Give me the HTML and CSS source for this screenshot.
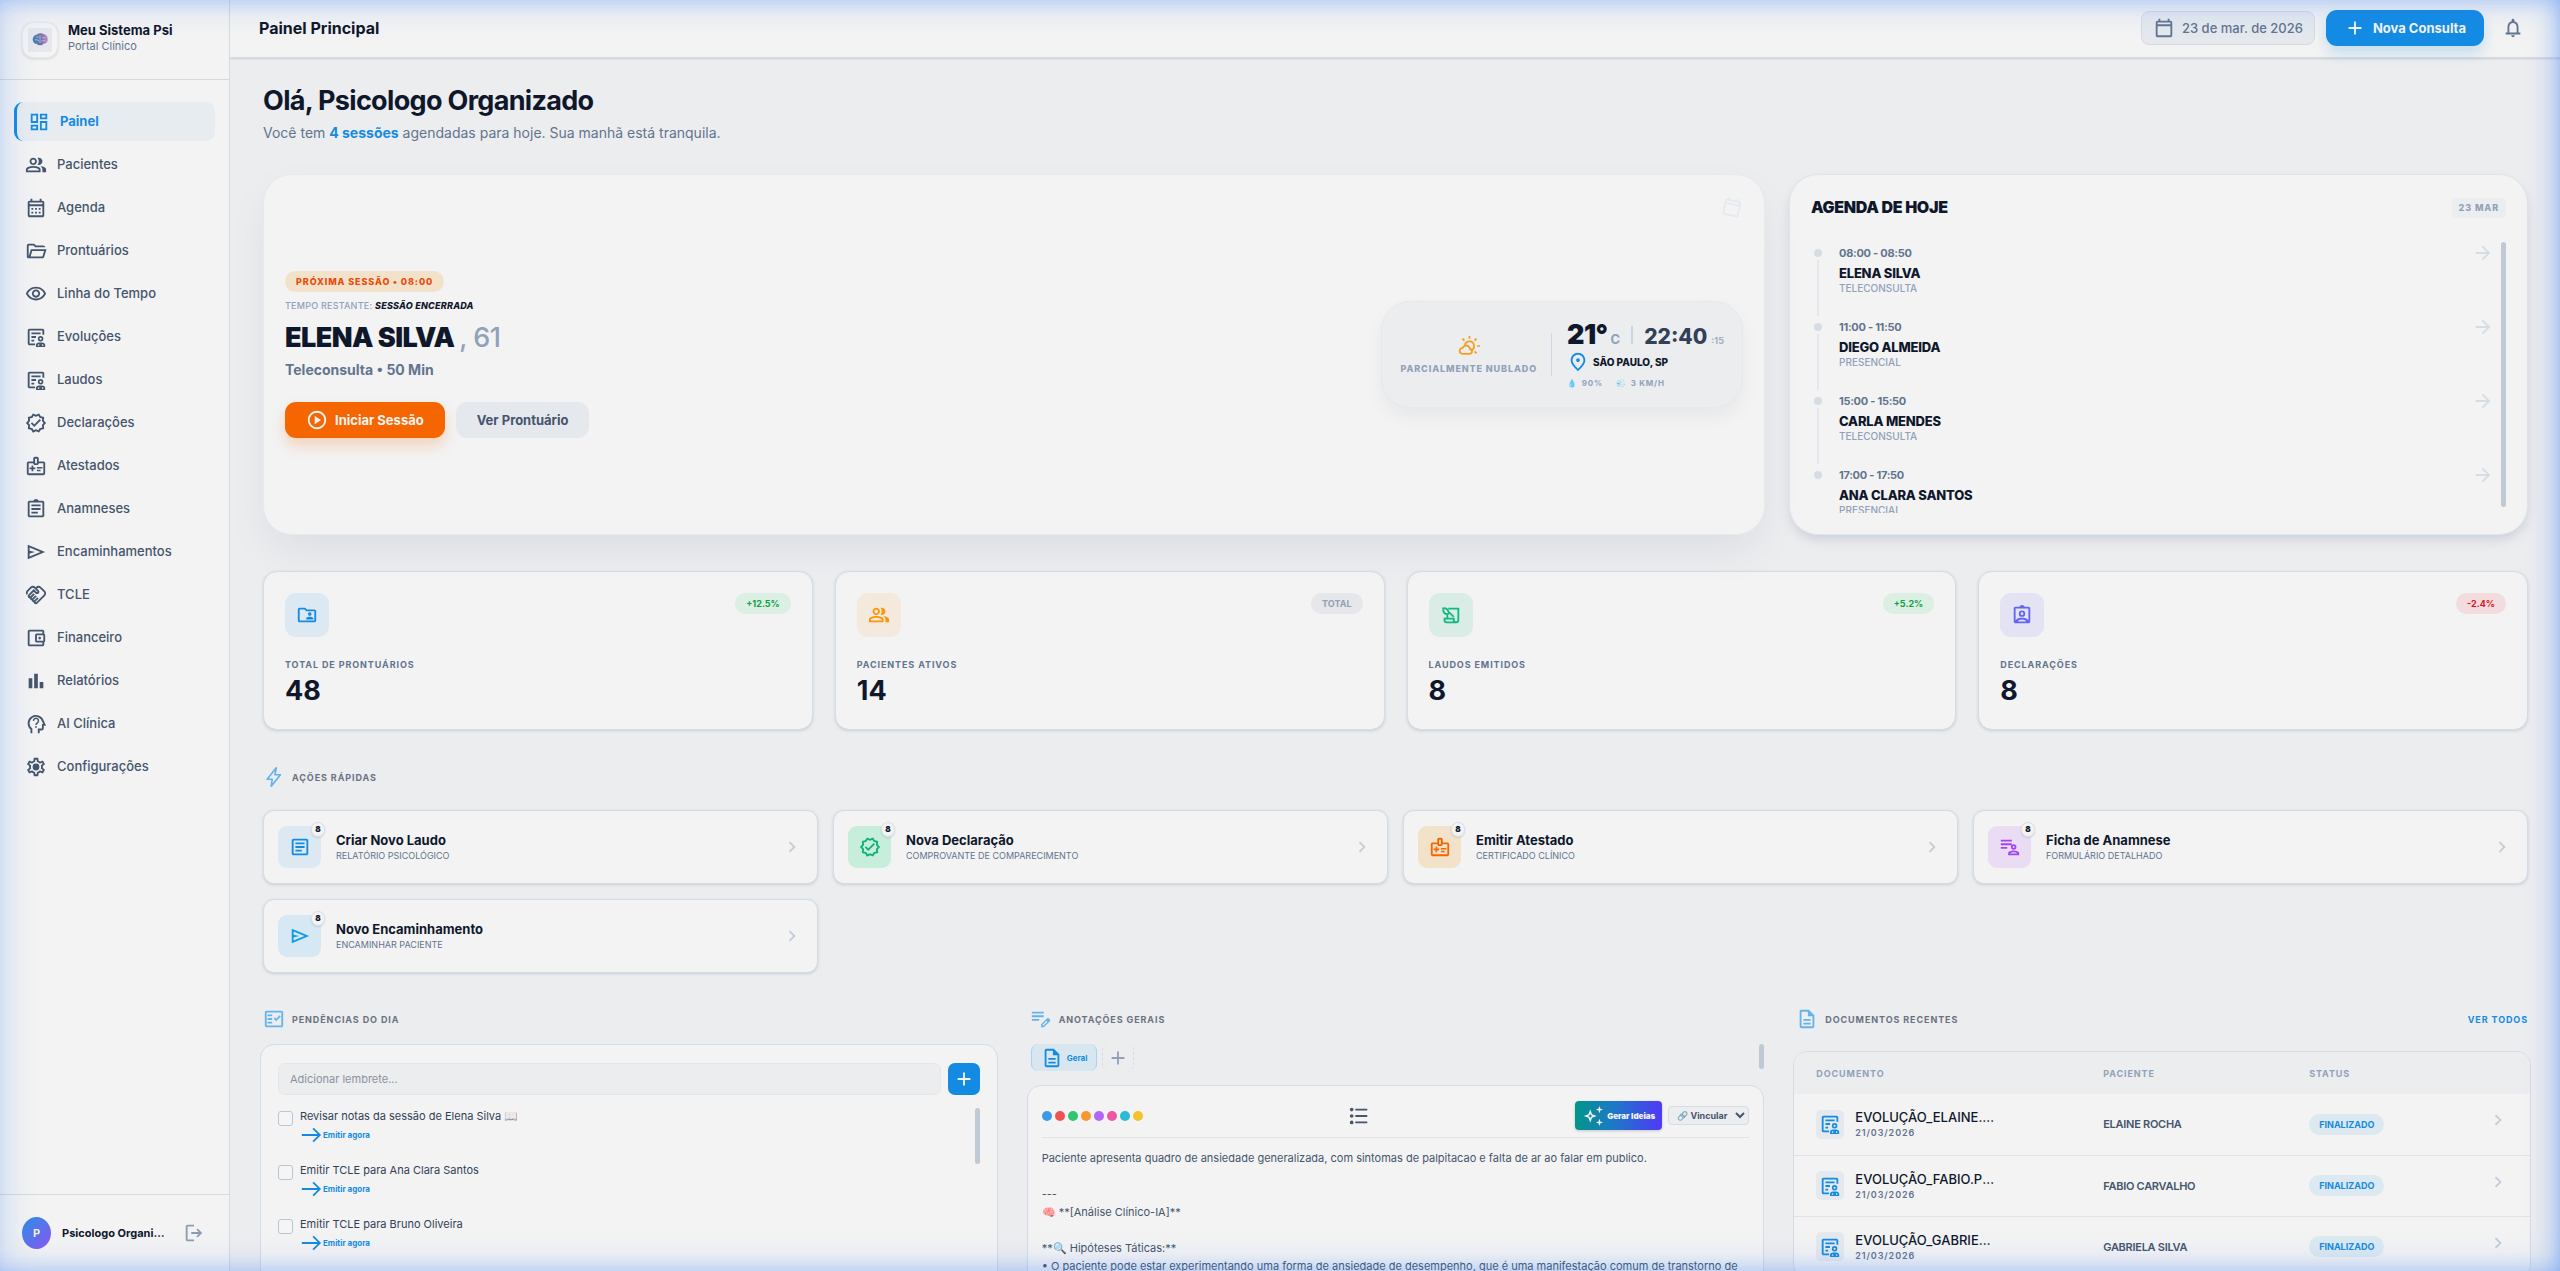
FILE: index.html
```html
<!DOCTYPE html>
<html lang="pt-BR">
<head>
<meta charset="utf-8">
<title>Meu Sistema Psi — Painel Principal</title>
<link rel="stylesheet" href="styles.css">
</head>
<body>
<svg class="sprite" aria-hidden="true">
  <symbol id="i-dashboard" viewBox="0 0 24 24"><path d="M19 5v2h-4V5h4M9 5v6H5V5h4m10 8v6h-4v-6h4M9 17v2H5v-2h4M21 3h-8v6h8V3zM11 3H3v10h8V3zm10 8h-8v10h8V11zm-10 4H3v6h8v-6z"/></symbol>
  <symbol id="i-group" viewBox="0 -960 960 960"><path d="M40-160v-112q0-34 17.500-62.500T104-378q62-31 126-46.500T360-440q66 0 130 15.500T616-378q29 15 46.500 43.500T680-272v112H40Zm720 0v-120q0-44-24.500-84.500T666-434q51 6 96 20.500t84 35.500q36 20 55 44.500t19 53.500v120H760ZM360-480q-66 0-113-47t-47-113q0-66 47-113t113-47q66 0 113 47t47 113q0 66-47 113t-113 47Zm400-160q0 66-47 113t-113 47q-11 0-28-2.500t-28-5.500q27-32 41.500-71t14.500-81q0-42-14.500-81T544-792q14-5 28-6.500t28-1.500q66 0 113 47t47 113ZM120-240h480v-32q0-11-5.500-20T580-306q-54-27-109-40.500T360-360q-56 0-111 13.500T140-306q-9 5-14.500 14t-5.500 20v32Zm240-320q33 0 56.500-23.500T440-640q0-33-23.500-56.500T360-720q-33 0-56.500 23.500T280-640q0 33 23.500 56.500T360-560Z"/></symbol>
  <symbol id="i-today" viewBox="0 -960 960 960"><path d="M200-80q-33 0-56.500-23.500T120-160v-560q0-33 23.500-56.500T200-800h40v-80h80v80h320v-80h80v80h40q33 0 56.500 23.500T840-720v560q0 33-23.500 56.500T760-80H200Zm0-80h560v-400H200v400Zm0-480h560v-80H200v80Z"/></symbol>
  <symbol id="i-month" viewBox="0 -960 960 960"><path d="M200-80q-33 0-56.500-23.500T120-160v-560q0-33 23.500-56.500T200-800h40v-80h80v80h320v-80h80v80h40q33 0 56.500 23.500T840-720v560q0 33-23.500 56.500T760-80H200Zm0-80h560v-400H200v400Zm0-480h560v-80H200v80Z"/><path d="M280-480h80v80h-80zM440-480h80v80h-80zM600-480h80v80h-80zM280-320h80v80h-80zM440-320h80v80h-80zM600-320h80v80h-80z"/></symbol>
  <symbol id="i-folder" viewBox="0 -960 960 960"><path d="M160-160q-33 0-56.500-23.500T80-240v-480q0-33 23.500-56.500T160-800h240l80 80h320q33 0 56.500 23.500T880-640H447l-80-80H160v480l96-320h684L837-217q-8 26-29.500 41.500T760-160H160Zm84-80h516l72-240H316l-72 240Z"/></symbol>
  <symbol id="i-eye" viewBox="0 0 24 24"><path d="M12 6c3.790 0 7.170 2.130 8.820 5.500C19.170 14.870 15.790 17 12 17s-7.170-2.130-8.820-5.500C4.830 8.130 8.210 6 12 6m0-2C7 4 2.730 7.110 1 11.500 2.730 15.890 7 19 12 19s9.270-3.110 11-7.500C21.270 7.110 17 4 12 4zm0 5c1.380 0 2.500 1.120 2.500 2.500S13.380 14 12 14s-2.500-1.120-2.500-2.500S10.620 9 12 9m0-2c-2.480 0-4.500 2.020-4.500 4.500S9.520 16 12 16s4.500-2.020 4.500-4.500S14.480 7 12 7z"/></symbol>
  <symbol id="i-notes" viewBox="0 0 24 24"><path d="M11 21H5c-1.100 0-2-.9-2-2V5c0-1.100.9-2 2-2h14c1.100 0 2 .9 2 2v4.500h-2V5H5v14h6zM7 7h10v2H7zM7 11h5v2H7zM7 15h3v2H7z"/><path fill-rule="evenodd" d="M17 11a3 3 0 1 1 0 6 3 3 0 0 1 0-6zm0 1.800a1.200 1.200 0 1 0 0 2.400 1.200 1.200 0 0 0 0-2.400z"/><path fill-rule="evenodd" d="M12 23v-2.500c0-2 2-2.500 5-2.500s5 .5 5 2.500V23zm2-1.500h1.500V20c-1 .1-1.500.3-1.500.8zm4.500 0H20v-.7c0-.5-.5-.7-1.500-.8z"/></symbol>
  <symbol id="i-verified" viewBox="0 0 24 24"><path d="M23 11.990l-2.440-2.790.340-3.690-3.610-.820L15.400 1.500 12 2.960 8.600 1.500 6.710 4.690 3.100 5.500l.340 3.700L1 11.990l2.440 2.790-.340 3.700 3.610.820 1.890 3.200 3.400-1.470 3.400 1.460 1.890-3.190 3.610-.820-.340-3.690L23 11.990zm-3.950 1.480l-.560.650.080.850.180 1.950-1.900.430-.840.190-.440.740-.990 1.680-1.780-.770-.800-.340-.790.340-1.780.770-.990-1.670-.440-.740-.840-.190-1.900-.430.180-1.960.080-.850-.560-.650L3.670 12l1.290-1.480.560-.650-.090-.860-.180-1.940 1.900-.430.840-.190.440-.740.990-1.680 1.780.770.800.340.790-.340 1.780-.770.990 1.680.440.740.840.190 1.900.430-.180 1.950-.080.850.560.650 1.290 1.470-1.280 1.480z"/><path d="M10.090 13.500l-2.320-2.330-1.480 1.490 3.800 3.810 7.340-7.360-1.480-1.490z"/></symbol>
  <symbol id="i-badge" viewBox="0 0 24 24"><path fill-rule="evenodd" d="M20 7h-5V4c0-1.100-.9-2-2-2h-2c-1.100 0-2 .9-2 2v3H4c-1.100 0-2 .9-2 2v11c0 1.100.9 2 2 2h16c1.100 0 2-.9 2-2V9c0-1.100-.9-2-2-2zm-9-3h2v5h-2V4zm9 16H4V9h5c0 1.100.9 2 2 2h2c1.100 0 2-.9 2-2h5v11z"/><path d="M7.200 11.500h1.800v2.200h2.200v1.800H9v2.200H7.200v-2.200H5v-1.800h2.200zM13 13h6v1.600h-6zM13 16h4v1.600h-4z"/></symbol>
  <symbol id="i-clip" viewBox="0 0 24 24"><path d="M7 15h7v2H7zm0-4h10v2H7zm0-4h10v2H7zM19 3h-4.180C14.400 1.840 13.300 1 12 1s-2.400.840-2.820 2H5c-1.100 0-2 .9-2 2v14c0 1.100.9 2 2 2h14c1.100 0 2-.9 2-2V5c0-1.100-.9-2-2-2zm0 16H5V5h14v14z"/></symbol>
  <symbol id="i-send" viewBox="0 -960 960 960"><path d="M120-160v-640l760 320-760 320Zm80-120 474-200-474-200v140l240 60-240 60v140Z"/></symbol>
  <symbol id="i-hands" viewBox="0 0 24 24"><path d="M12.220 19.850c-.180.180-.500.210-.710 0-.180-.180-.210-.500 0-.710l3.390-3.390-1.410-1.410-3.390 3.390c-.190.200-.510.190-.710 0-.210-.210-.180-.530 0-.710l3.390-3.390-1.410-1.410-3.390 3.390c-.180.180-.500.210-.710 0-.190-.190-.190-.510 0-.710l3.390-3.390-1.420-1.410-3.390 3.390c-.180.180-.500.210-.710 0-.190-.200-.190-.510 0-.710L9.520 8.400l1.870 1.860c.950.950 2.590.940 3.540 0 .980-.980.980-2.560 0-3.540l-1.860-1.860.280-.280c.780-.780 2.050-.780 2.830 0l4.240 4.240c.780.780.780 2.050 0 2.830l-8.200 8.200zM21.830 13.070c1.560-1.560 1.560-4.090 0-5.660l-4.240-4.240c-1.560-1.560-4.090-1.560-5.660 0l-.280.280-.280-.280c-1.560-1.560-4.090-1.560-5.660 0L2.170 6.710C.750 8.130.620 10.340 1.770 11.900l1.450-1.450c-.390-.750-.260-1.700.370-2.330l3.540-3.540c.780-.780 2.050-.780 2.830 0l3.560 3.560c.180.180.210.500 0 .710-.210.210-.530.180-.710 0L9.520 5.570l-5.800 5.790c-.980.970-.980 2.560 0 3.540.390.390.890.630 1.420.700.070.520.300 1.020.700 1.420.400.400.900.630 1.420.700.070.520.300 1.020.700 1.420.400.400.900.630 1.420.700.070.540.310 1.030.700 1.420.470.470 1.100.730 1.770.730.670 0 1.300-.260 1.770-.730l8.210-8.190z"/></symbol>
  <symbol id="i-wallet" viewBox="0 0 24 24"><path d="M21 7.280V5c0-1.100-.9-2-2-2H5c-1.110 0-2 .9-2 2v14c0 1.100.890 2 2 2h14c1.100 0 2-.9 2-2v-2.280c.590-.350 1-.980 1-1.720V9c0-.740-.410-1.370-1-1.720zM20 9v6h-7V9h7zM5 19V5h14v2h-6c-1.100 0-2 .9-2 2v6c0 1.100.9 2 2 2h6v2H5z"/><circle cx="16" cy="12" r="1.500"/></symbol>
  <symbol id="i-bars" viewBox="0 0 24 24"><path d="M4 9h4v11H4zm12 4h4v7h-4zm-6-9h4v16h-4z"/></symbol>
  <symbol id="i-mind" viewBox="0 0 24 24"><path fill="none" stroke="currentColor" stroke-width="2" d="M7 22v-4.500A8 8 0 1 1 19.600 9L21.400 13H19.500v3.500a1.500 1.500 0 0 1-1.500 1.500h-3V22"/><path fill="none" stroke="currentColor" stroke-width="1.600" d="M9.300 8.600a2.700 2.700 0 1 1 4.200 2.200c-1 .7-1.500 1.100-1.500 2.300"/><circle cx="12" cy="15.200" r="1"/></symbol>
  <symbol id="i-gear" viewBox="0 0 24 24"><path d="M19.430 12.980c.040-.320.070-.640.070-.980 0-.340-.030-.660-.070-.980l2.110-1.650c.190-.150.240-.420.120-.640l-2-3.460c-.090-.160-.260-.250-.440-.250-.060 0-.120.010-.170.030l-2.490 1c-.520-.400-1.080-.730-1.690-.980l-.380-2.650C14.460 2.180 14.250 2 14 2h-4c-.250 0-.460.180-.490.420l-.380 2.650c-.610.250-1.170.590-1.690.980l-2.490-1c-.060-.020-.120-.030-.180-.030-.170 0-.340.090-.430.250l-2 3.460c-.130.220-.070.490.120.640l2.110 1.650c-.040.320-.070.650-.070.980 0 .330.030.660.070.980l-2.110 1.650c-.190.150-.240.420-.120.640l2 3.460c.090.160.260.250.440.250.060 0 .120-.010.170-.030l2.490-1c.520.400 1.080.730 1.690.980l.380 2.650c.030.240.240.420.490.420h4c.250 0 .460-.180.490-.420l.380-2.650c.610-.250 1.170-.590 1.690-.980l2.490 1c.060.020.120.030.180.030.170 0 .340-.090.430-.250l2-3.460c.120-.220.070-.490-.120-.640l-2.110-1.650zm-1.980-1.710c.040.310.050.520.050.730 0 .210-.020.430-.050.730l-.140 1.130.890.700 1.080.840-.700 1.210-1.270-.510-1.040-.420-.900.680c-.430.320-.840.560-1.250.730l-1.060.430-.160 1.130-.200 1.350h-1.400l-.190-1.350-.160-1.130-1.060-.430c-.430-.180-.830-.410-1.230-.710l-.910-.700-1.060.430-1.270.510-.700-1.210 1.080-.840.890-.700-.140-1.130c-.030-.310-.050-.540-.050-.740s.020-.430.050-.730l.140-1.130-.890-.700-1.080-.840.700-1.210 1.270.510 1.040.420.900-.680c.430-.320.840-.560 1.250-.730l1.060-.430.160-1.130.200-1.350h1.390l.190 1.350.160 1.130 1.060.430c.430.180.830.410 1.230.710l.910.700 1.060-.430 1.270-.510.700 1.210-1.070.850-.890.700.140 1.130z"/><circle cx="12" cy="12" r="3.700"/></symbol>
  <symbol id="i-logout" viewBox="0 0 24 24"><path d="M5 5h7V3H5c-1.100 0-2 .9-2 2v14c0 1.100.9 2 2 2h7v-2H5V5zM16 7l-1.400 1.450L17.150 11H9v2h8.150l-2.550 2.550L16 17l5-5z"/></symbol>
  <symbol id="i-bell" viewBox="0 0 24 24"><path d="M12 22c1.100 0 2-.9 2-2h-4c0 1.100.9 2 2 2zm6-5v-6c0-3.070-1.630-5.640-4.500-6.320V3.500c0-.830-.670-1.500-1.500-1.500s-1.500.670-1.500 1.500v1.180C7.640 5.360 6 7.920 6 11v6H4v2h16v-2h-2zm-2 0H8v-6c0-2.480 1.510-4.500 4-4.500s4 2.020 4 4.500v6z"/></symbol>
  <symbol id="i-add" viewBox="0 0 24 24"><path d="M19 13h-6v6h-2v-6H5v-2h6V5h2v6h6v2z"/></symbol>
  <symbol id="i-play" viewBox="0 0 24 24"><path d="M12 2C6.480 2 2 6.480 2 12s4.480 10 10 10 10-4.480 10-10S17.520 2 12 2zm0 18c-4.410 0-8-3.590-8-8s3.590-8 8-8 8 3.590 8 8-3.590 8-8 8zM9.500 16.500l7-4.500-7-4.500z"/></symbol>
  <symbol id="i-sun" viewBox="0 0 24 24"><g fill="none" stroke="currentColor" stroke-width="1.900"><path d="M12.500 1v3.200M20.200 4l-2.200 2.200M24 12h-3.200M20.300 20l-2.200-2.200M4.800 4L7 6.200M7.500 11.800a5 5 0 1 1 6.300 5.100"/><path d="M5 20.500a3.200 3.200 0 0 1 0-6.400 4.200 4.200 0 0 1 8 1.200 2.600 2.600 0 0 1-.5 5.200z"/></g></symbol>
  <symbol id="i-pin" viewBox="0 0 24 24"><path d="M12 12c-1.100 0-2-.9-2-2s.9-2 2-2 2 .9 2 2-.9 2-2 2zm6-1.800C18 6.570 15.350 4 12 4s-6 2.570-6 6.200c0 2.340 1.950 5.440 6 9.140 4.050-3.700 6-6.800 6-9.140zM12 2c4.200 0 8 3.220 8 8.200 0 3.320-2.670 7.250-8 11.800-5.330-4.550-8-8.480-8-11.800C4 5.220 7.800 2 12 2z"/></symbol>
  <symbol id="i-arrow" viewBox="0 0 24 24"><path d="M12 4l-1.410 1.410L16.170 11H4v2h12.170l-5.580 5.590L12 20l8-8z"/></symbol>
  <symbol id="i-long" viewBox="0 0 24 24"><path d="M15 4l-1.410 1.410L19.170 11H2v2h17.170l-5.580 5.590L15 20l8-8z"/></symbol>
  <symbol id="i-shared" viewBox="0 0 24 24"><path d="M20 6h-8l-2-2H4c-1.100 0-2 .9-2 2v12c0 1.100.9 2 2 2h16c1.100 0 2-.9 2-2V8c0-1.100-.9-2-2-2zm0 12H4V6h5.170l2 2H20v10z"/><circle cx="15" cy="11" r="2"/><path d="M11 17h8v-1c0-1.330-2.670-2-4-2s-4 .670-4 2z"/></symbol>
  <symbol id="i-edu" viewBox="0 0 24 24"><g fill="none" stroke="currentColor" stroke-width="2"><path d="M8 15.500V12M9 5h11v12.500a2.500 2.500 0 0 1-5 0V16H5v2a2 2 0 0 0 2 2h10.500"/><path d="M2.500 5c3.200-1 6 0 6.800 3.500l5.700 5.500M3.500 6c0 3 2 5 5 5l2-2"/></g></symbol>
  <symbol id="i-person" viewBox="0 0 24 24"><path fill-rule="evenodd" d="M19 3h-4.180C14.400 1.840 13.300 1 12 1s-2.400.840-2.820 2H5c-1.100 0-2 .9-2 2v14c0 1.100.9 2 2 2h14c1.100 0 2-.9 2-2V5c0-1.100-.9-2-2-2zM5 5h14v12.600C17.500 15.600 14.800 15 12 15s-5.500.600-7 2.600V5zm2.500 14c.7-1.200 2.700-2 4.500-2s3.800.8 4.500 2z"/><path fill-rule="evenodd" d="M12 7a3.500 3.500 0 1 0 0 7 3.500 3.500 0 0 0 0-7zm0 2a1.500 1.500 0 1 1 0 3 1.500 1.500 0 0 1 0-3z"/></symbol>
  <symbol id="i-bolt" viewBox="0 0 24 24"><path fill="none" stroke="currentColor" stroke-width="1.800" stroke-linejoin="round" d="M14.500 2L4.500 14.500H10L9 22l10-12.500h-6z"/></symbol>
  <symbol id="i-check" viewBox="0 0 24 24"><path fill-rule="evenodd" d="M4 3h16c1.100 0 2 .9 2 2v14c0 1.100-.9 2-2 2H4c-1.100 0-2-.9-2-2V5c0-1.100.9-2 2-2zm0 2v14h16V5z"/><path d="M5 7h5v2H5zM5 11h5v2H5zM5 15h5v2H5zM19.400 9.400L18 8l-3.600 3.600L13 10.200l-1.400 1.400 2.800 2.800z"/></symbol>
  <symbol id="i-edit" viewBox="0 0 24 24"><path d="M2 4h13v2H2zM2 8h13v2H2zM2 12h8v2H2z"/><path fill-rule="evenodd" d="M12 21v-3.100l6.400-6.400a1.700 1.700 0 0 1 2.400 0l.7.700a1.700 1.700 0 0 1 0 2.400L15.100 21zm1.800-1.700h.9l4.300-4.300-1-1-4.200 4.300z"/></symbol>
  <symbol id="i-doc" viewBox="0 0 24 24"><path d="M8 16h8v2H8zm0-4h8v2H8zm6-10H6c-1.100 0-2 .9-2 2v16c0 1.100.890 2 1.990 2H18c1.100 0 2-.9 2-2V8l-6-6zm4 18H6V4h7v5h5v11z"/></symbol>
  <symbol id="i-article" viewBox="0 0 24 24"><path d="M19 5v14H5V5h14m0-2H5c-1.100 0-2 .9-2 2v14c0 1.100.9 2 2 2h14c1.100 0 2-.9 2-2V5c0-1.100-.9-2-2-2zm-5 14H7v-2h7v2zm3-4H7v-2h10v2zm0-4H7V7h10v2z"/></symbol>
  <symbol id="i-patient" viewBox="0 0 24 24"><path d="M2 4h12v2H2zM2 8h12v2H2zM2 12h7v2H2z"/><path fill-rule="evenodd" d="M16 9a3 3 0 1 1 0 6 3 3 0 0 1 0-6zm0 2a1 1 0 1 0 0 2 1 1 0 0 0 0-2z"/><path fill-rule="evenodd" d="M10 21v-2.300c0-1.900 3.500-2.900 6-2.900s6 1 6 2.900V21zm2.200-1.800h7.600c-.5-.8-2.300-1.400-3.800-1.400s-3.300.6-3.800 1.400z"/></symbol>
  <symbol id="i-spark" viewBox="0 0 24 24"><path fill-rule="evenodd" d="M9 5l2 5 5 2-5 2-2 5-2-5-5-2 5-2zm0 4.600L8.200 11.200 6.500 12l1.700.8L9 14.500l.8-1.700 1.700-.8-1.700-.8z"/><path d="M19 1l1 3 3 1-3 1-1 3-1-3-3-1 3-1zM19 15l1 3 3 1-3 1-1 3-1-3-3-1 3-1z"/></symbol>
  <symbol id="i-list" viewBox="0 0 24 24"><circle cx="4" cy="5" r="2"/><circle cx="4" cy="12" r="2"/><circle cx="4" cy="19" r="2"/><path d="M8 4h13v2H8zM8 11h13v2H8zM8 18h13v2H8z"/></symbol>
  <symbol id="i-chev" viewBox="0 0 24 24"><path d="M10 6L8.590 7.410 13.170 12l-4.580 4.590L10 18l6-6z"/></symbol>
</svg>

<div class="app">
  <aside class="sidebar">
    <div class="brand">
      <span class="logo"><svg viewBox="0 0 24 24"><defs><linearGradient id="brain-fill" x1="0" y1="0" x2="1" y2="0"><stop offset="0" stop-color="#3f86b5"/><stop offset=".5" stop-color="#6a6fae"/><stop offset="1" stop-color="#c58ac4"/></linearGradient></defs><rect width="24" height="24" fill="#e7e8ec"/><path fill="url(#brain-fill)" d="M5 13c-1-3 1-6 4-6.500 2-1.500 5-1.500 7-.2 3 .5 4.500 4 3.500 6.500-.5 2-2 3-4 2.800-.5 1.600-2 2.200-3.500 1.400-1.500.5-2.800 0-3.200-1.200C6.800 16 5.500 15 5 13z"/><path fill="none" stroke="#e3e8f0" stroke-width=".6" d="M8 8.500c1 1 2 1 3 .3M7 12c1.500-.8 3 .2 4 1.200M12 7v8M14 9c1 1.200 2.500 1 3.500.6M13.500 13c1.200-.6 2.600-.4 4 .2"/></svg></span>
      <div><div class="brand-name">Meu Sistema Psi</div><div class="brand-sub">Portal Clínico</div></div>
    </div>
    <nav class="nav">
      <a class="active" href="#"><svg class="icon"><use href="#i-dashboard"/></svg>Painel</a>
      <a href="#"><svg class="icon"><use href="#i-group"/></svg>Pacientes</a>
      <a href="#"><svg class="icon"><use href="#i-month"/></svg>Agenda</a>
      <a href="#"><svg class="icon"><use href="#i-folder"/></svg>Prontuários</a>
      <a href="#"><svg class="icon"><use href="#i-eye"/></svg>Linha do Tempo</a>
      <a href="#"><svg class="icon"><use href="#i-notes"/></svg>Evoluções</a>
      <a href="#"><svg class="icon"><use href="#i-notes"/></svg>Laudos</a>
      <a href="#"><svg class="icon"><use href="#i-verified"/></svg>Declarações</a>
      <a href="#"><svg class="icon"><use href="#i-badge"/></svg>Atestados</a>
      <a href="#"><svg class="icon"><use href="#i-clip"/></svg>Anamneses</a>
      <a href="#"><svg class="icon"><use href="#i-send"/></svg>Encaminhamentos</a>
      <a href="#"><svg class="icon"><use href="#i-hands"/></svg>TCLE</a>
      <a href="#"><svg class="icon"><use href="#i-wallet"/></svg>Financeiro</a>
      <a href="#"><svg class="icon"><use href="#i-bars"/></svg>Relatórios</a>
      <a href="#"><svg class="icon"><use href="#i-mind"/></svg>AI Clínica</a>
      <a href="#"><svg class="icon"><use href="#i-gear"/></svg>Configurações</a>
    </nav>
    <div class="user">
      <span class="avatar">P</span>
      <span class="user-name">Psicologo Organizado</span>
      <button class="bare" aria-label="Sair"><svg class="icon"><use href="#i-logout"/></svg></button>
    </div>
  </aside>

  <div class="page">
    <header class="topbar">
      <h1>Painel Principal</h1>
      <div class="date"><svg class="icon"><use href="#i-today"/></svg>23 de mar. de 2026</div>
      <button class="new"><svg class="icon"><use href="#i-add"/></svg>Nova Consulta</button>
      <button class="bare bell" aria-label="Notificações"><svg class="icon"><use href="#i-bell"/></svg></button>
    </header>

    <main class="content">
      <section class="hello">
        <h2>Olá, Psicologo Organizado</h2>
        <p>Você tem <strong>4 sessões</strong> agendadas para hoje. Sua manhã está tranquila.</p>
      </section>

      <section class="top">
        <article class="hero">
          <svg class="icon watermark"><use href="#i-today"/></svg>
          <div class="next">
            <span class="pill-next">PRÓXIMA SESSÃO • 08:00</span>
            <p class="remaining">TEMPO RESTANTE: <em>SESSÃO ENCERRADA</em></p>
            <h3>ELENA SILVA <span>, 61</span></h3>
            <p class="kind">Teleconsulta • 50 Min</p>
            <div class="actions">
              <button class="start"><svg class="icon"><use href="#i-play"/></svg>Iniciar Sessão</button>
              <button class="record">Ver Prontuário</button>
            </div>
          </div>
          <div class="weather">
            <div class="sky"><svg class="icon"><use href="#i-sun"/></svg><span>PARCIALMENTE NUBLADO</span></div>
            <div class="now">
              <div class="temp"><b>21°</b><small>C</small><i></i><time>22:40</time><small class="sec">:15</small></div>
              <div class="place"><svg class="icon"><use href="#i-pin"/></svg>SÃO PAULO, SP</div>
              <div class="air"><span><span class="emoji">💧</span>90%</span><span><span class="emoji">💨</span>3 KM/H</span></div>
            </div>
          </div>
        </article>

        <article class="agenda">
          <div class="agenda-head"><h3>AGENDA DE HOJE</h3><span>23 MAR</span></div>
          <div class="scroll">
            <ul class="slots">
              <li><span class="mark"></span><div><p class="time">08:00 - 08:50</p><p class="who">ELENA SILVA</p><p class="type">TELECONSULTA</p></div><svg class="icon"><use href="#i-arrow"/></svg></li>
              <li><span class="mark"></span><div><p class="time">11:00 - 11:50</p><p class="who">DIEGO ALMEIDA</p><p class="type">PRESENCIAL</p></div><svg class="icon"><use href="#i-arrow"/></svg></li>
              <li><span class="mark"></span><div><p class="time">15:00 - 15:50</p><p class="who">CARLA MENDES</p><p class="type">TELECONSULTA</p></div><svg class="icon"><use href="#i-arrow"/></svg></li>
              <li><span class="mark"></span><div><p class="time">17:00 - 17:50</p><p class="who">ANA CLARA SANTOS</p><p class="type">PRESENCIAL</p></div><svg class="icon"><use href="#i-arrow"/></svg></li>
            </ul>
            <span class="thumb thumb-agenda"></span>
          </div>
        </article>
      </section>

      <section class="stats">
        <article><div class="stat-top"><span class="tile blue"><svg class="icon"><use href="#i-shared"/></svg></span><span class="delta up">+12.5%</span></div><p>TOTAL DE PRONTUÁRIOS</p><b>48</b></article>
        <article><div class="stat-top"><span class="tile amber"><svg class="icon"><use href="#i-group"/></svg></span><span class="delta flat">TOTAL</span></div><p>PACIENTES ATIVOS</p><b>14</b></article>
        <article><div class="stat-top"><span class="tile green"><svg class="icon"><use href="#i-edu"/></svg></span><span class="delta up">+5.2%</span></div><p>LAUDOS EMITIDOS</p><b>8</b></article>
        <article><div class="stat-top"><span class="tile indigo"><svg class="icon"><use href="#i-person"/></svg></span><span class="delta down">-2.4%</span></div><p>DECLARAÇÕES</p><b>8</b></article>
      </section>

      <h4 class="label label-quick"><svg class="icon"><use href="#i-bolt"/></svg>AÇÕES RÁPIDAS</h4>
      <section class="quick">
        <a href="#"><span class="tile blue"><svg class="icon"><use href="#i-article"/></svg><span class="count">8</span></span><span class="quick-text"><b>Criar Novo Laudo</b><small>RELATÓRIO PSICOLÓGICO</small></span><svg class="icon chev"><use href="#i-chev"/></svg></a>
        <a href="#"><span class="tile mint"><svg class="icon"><use href="#i-verified"/></svg><span class="count">8</span></span><span class="quick-text"><b>Nova Declaração</b><small>COMPROVANTE DE COMPARECIMENTO</small></span><svg class="icon chev"><use href="#i-chev"/></svg></a>
        <a href="#"><span class="tile orange"><svg class="icon"><use href="#i-badge"/></svg><span class="count">8</span></span><span class="quick-text"><b>Emitir Atestado</b><small>CERTIFICADO CLÍNICO</small></span><svg class="icon chev"><use href="#i-chev"/></svg></a>
        <a href="#"><span class="tile purple"><svg class="icon"><use href="#i-patient"/></svg><span class="count">8</span></span><span class="quick-text"><b>Ficha de Anamnese</b><small>FORMULÁRIO DETALHADO</small></span><svg class="icon chev"><use href="#i-chev"/></svg></a>
        <a href="#"><span class="tile sky-blue"><svg class="icon"><use href="#i-send"/></svg><span class="count">8</span></span><span class="quick-text"><b>Novo Encaminhamento</b><small>ENCAMINHAR PACIENTE</small></span><svg class="icon chev"><use href="#i-chev"/></svg></a>
      </section>

      <section class="bottom">
        <div class="col">
          <h4 class="label"><svg class="icon"><use href="#i-check"/></svg>PENDÊNCIAS DO DIA</h4>
          <div class="panel todo">
            <form class="add"><input type="text" placeholder="Adicionar lembrete..." aria-label="Adicionar lembrete"><button type="button" aria-label="Adicionar"><svg class="icon"><use href="#i-add"/></svg></button></form>
            <div class="scroll">
              <ul class="tasks">
                <li><input type="checkbox" id="t1"><div><label for="t1">Revisar notas da sessão de Elena Silva <span class="emoji">📖</span></label><a href="#"><svg class="icon"><use href="#i-long"/></svg>Emitir agora</a></div></li>
                <li><input type="checkbox" id="t2"><div><label for="t2">Emitir TCLE para Ana Clara Santos</label><a href="#"><svg class="icon"><use href="#i-long"/></svg>Emitir agora</a></div></li>
                <li><input type="checkbox" id="t3"><div><label for="t3">Emitir TCLE para Bruno Oliveira</label><a href="#"><svg class="icon"><use href="#i-long"/></svg>Emitir agora</a></div></li>
              </ul>
              <span class="thumb thumb-todo"></span>
            </div>
          </div>
        </div>

        <div class="col">
          <h4 class="label"><svg class="icon"><use href="#i-edit"/></svg>ANOTAÇÕES GERAIS</h4>
          <div class="tabs">
            <button class="tab"><svg class="icon"><use href="#i-doc"/></svg>Geral</button>
            <button class="tab-add" aria-label="Nova aba"><svg class="icon"><use href="#i-add"/></svg></button>
            <span class="thumb thumb-tabs"></span>
          </div>
          <div class="panel notes">
            <div class="tools">
              <div class="dots"><i class="c1"></i><i class="c2"></i><i class="c3"></i><i class="c4"></i><i class="c5"></i><i class="c6"></i><i class="c7"></i><i class="c8"></i></div>
              <button class="bare list" aria-label="Lista"><svg class="icon"><use href="#i-list"/></svg></button>
              <div class="tools-end">
                <button class="ideas"><svg class="icon"><use href="#i-spark"/></svg>Gerar Ideias</button>
                <select aria-label="Vincular"><option>🔗 Vincular</option></select>
              </div>
            </div>
            <textarea rows="12" aria-label="Anotação">Paciente apresenta quadro de ansiedade generalizada, com sintomas de palpitacao e falta de ar ao falar em publico.

---
🧠 **[Análise Clínico-IA]**

**🔍 Hipóteses Táticas:**
• O paciente pode estar experimentando uma forma de ansiedade de desempenho, que é uma manifestação comum de transtorno de ansiedade social.</textarea>
          </div>
        </div>

        <div class="col">
          <h4 class="label label-docs"><svg class="icon"><use href="#i-doc"/></svg>DOCUMENTOS RECENTES<a href="#">VER TODOS</a></h4>
          <div class="panel docs">
            <table>
              <colgroup><col class="w-doc"><col class="w-who"><col class="w-status"><col></colgroup>
              <thead><tr><th>DOCUMENTO</th><th>PACIENTE</th><th>STATUS</th><th></th></tr></thead>
              <tbody>
                <tr><td><div class="file"><span><svg class="icon"><use href="#i-notes"/></svg></span><div><b>EVOLUÇÃO_ELAINE.ROCHA</b><small>21/03/2026</small></div></div></td><td class="patient">ELAINE ROCHA</td><td><span class="done">FINALIZADO</span></td><td class="go"><svg class="icon"><use href="#i-chev"/></svg></td></tr>
                <tr><td><div class="file"><span><svg class="icon"><use href="#i-notes"/></svg></span><div><b>EVOLUÇÃO_FABIO.PEREIRA</b><small>21/03/2026</small></div></div></td><td class="patient">FABIO CARVALHO</td><td><span class="done">FINALIZADO</span></td><td class="go"><svg class="icon"><use href="#i-chev"/></svg></td></tr>
                <tr><td><div class="file"><span><svg class="icon"><use href="#i-notes"/></svg></span><div><b>EVOLUÇÃO_GABRIELA.SILVA</b><small>21/03/2026</small></div></div></td><td class="patient">GABRIELA SILVA</td><td><span class="done">FINALIZADO</span></td><td class="go"><svg class="icon"><use href="#i-chev"/></svg></td></tr>
              </tbody>
            </table>
          </div>
        </div>
      </section>
    </main>
  </div>
</div>
<div class="glow"></div>
</body>
</html>
```
FILE: styles.css
```css
* { box-sizing: border-box; margin: 0; padding: 0; }
body { font-family: "Inter", "Noto Sans", sans-serif; font-size: 13px; color: #0f172b; background: #ecedef; }
button, input, select, textarea { font: inherit; color: inherit; }
button { border: 0; cursor: pointer; }
a { text-decoration: none; color: inherit; }
ul { list-style: none; }
.sprite { display: none; }
.icon { width: 22px; height: 22px; fill: currentColor; flex: none; display: block; }
.bare { background: none; }
.emoji { font-family: "Inter", "Noto Color Emoji", sans-serif; opacity: .8; }

.app { display: grid; grid-template-columns: 230px 1fr; height: 100vh; overflow: hidden; }

/* Sidebar */
.sidebar { display: flex; flex-direction: column; background: #f3f3f3; border-right: 1px solid #d3dae2; }
.brand { display: flex; gap: 10px; padding: 22px 22px 21px; border-bottom: 1px solid #d3dae2; }
.logo { width: 36px; height: 36px; border: 1px solid #e6e9ed; border-radius: 11px; background: #f4f4f4; box-shadow: 0 1px 3px rgba(15, 23, 43, .14); display: grid; place-items: center; }
.logo svg { width: 24px; height: 24px; }
.brand-name { font-weight: 700; line-height: 16px; }
.brand-sub { font-size: 11px; line-height: 16px; color: #62748e; }
.nav { flex: 1; display: flex; flex-direction: column; gap: 4px; padding: 22px 14px; }
.nav a { display: flex; align-items: center; gap: 10px; padding: 8px 11px; line-height: 23px; font-weight: 500; color: #45556c; border-radius: 9px; }
.nav .active { border-left: 3px solid #148be3; background: #e7ecf0; color: #148be3; font-weight: 700; }
.user { display: flex; align-items: center; gap: 11px; padding: 22px; border-top: 1px solid #d3dae2; }
.avatar { width: 29px; height: 32px; border-radius: 50%; background: linear-gradient(135deg, #2b8fe6, #8b55f3); color: #f3f3f3; font-size: 11px; font-weight: 700; display: grid; place-items: center; flex: none; }
.user-name { width: 104px; font-size: 11px; font-weight: 700; overflow: hidden; text-overflow: ellipsis; white-space: nowrap; }
.user .bare { color: #8b9db5; margin-left: 6px; }

/* Top bar */
.page { display: flex; flex-direction: column; min-width: 0; overflow: hidden; }
.topbar { flex: none; display: flex; align-items: center; gap: 11px; height: 58px; padding: 0 29px 2px; background: #f3f3f3; border-bottom: 1px solid #d3dae2; box-shadow: 0 1px 2px rgba(15, 23, 43, .14); }
.topbar h1 { flex: 1; font-size: 16px; font-weight: 700; }
.date { display: flex; align-items: center; gap: 7px; padding: 5px 11px; border: 1px solid #d3dae2; border-radius: 8px; background: #e5e9ee; color: #62748e; font-weight: 500; }
.new { display: flex; align-items: center; gap: 7px; padding: 7px 18px; border-radius: 11px; background: #148be3; color: #f3f3f3; font-weight: 700; box-shadow: 0 8px 14px rgba(20, 139, 227, .2); }
.bell { padding: 7px; color: #62748e; }

/* Content */
.content { padding: 26px 32px 0 33px; }
.hello h2 { font-size: 27px; line-height: 34px; font-weight: 700; letter-spacing: -.025em; }
.hello p { margin-top: 4px; font-size: 14px; line-height: 22px; color: #62748e; }
.hello strong { color: #148be3; font-weight: 700; }
.top { display: grid; grid-template-columns: repeat(3, minmax(0, 1fr)); gap: 24px; margin-top: 30px; }
.hero { position: relative; grid-column: span 2; display: flex; align-items: center; justify-content: space-between; padding: 21px; background: #f3f3f3; border: 1px solid #e6e9ee; border-radius: 29px; box-shadow: 0 18px 40px -8px rgba(98, 116, 142, .14); }
.watermark { position: absolute; top: 21px; right: 21px; color: #e4eaf0; transform: rotate(12deg); }
.pill-next { display: inline-block; padding: 0 11px; border-radius: 11px; background: #f3e2ca; color: #ea4a0b; font-size: 9px; line-height: 21px; font-weight: 800; letter-spacing: .1em; }
.remaining { margin-top: 7px; font-size: 9px; line-height: 14px; font-weight: 500; letter-spacing: .025em; color: #90a1b9; }
.remaining em { color: #0f172b; font-weight: 800; }
.hero h3 { margin-top: 8px; font-size: 27px; line-height: 34px; font-weight: 900; letter-spacing: -.02em; }
.hero h3 span { color: #90a1b9; font-weight: 500; }
.kind { margin-top: 5px; font-size: 14px; line-height: 20px; font-weight: 700; color: #62748e; }
.actions { display: flex; gap: 11px; margin-top: 22px; }
.actions button { display: flex; align-items: center; gap: 7px; height: 36px; padding: 0 21px; border-radius: 11px; font-weight: 700; }
.start { background: #f56600; color: #f3f3f3; box-shadow: 0 8px 14px rgba(245, 102, 0, .22); }
.record { background: #e5e8ed; color: #45556c; }

.weather { display: flex; padding: 17px 18px; border: 1px solid #e5e8ee; border-radius: 29px; background: #ecedef; box-shadow: 0 9px 16px rgba(98, 116, 142, .08); }
.sky { display: flex; flex-direction: column; align-items: center; justify-content: center; gap: 6px; color: #90a1b9; font-size: 9px; font-weight: 800; letter-spacing: .1em; }
.sky .icon { color: #f59e1b; }
.now { position: relative; margin-left: 14px; padding-left: 16px; }
.now::before { content: ""; position: absolute; left: 0; top: 14px; bottom: 14px; width: 1px; background: #d0d7e0; }
.temp { display: flex; align-items: baseline; line-height: 1; }
.temp b { font-size: 27px; line-height: 32px; font-weight: 900; letter-spacing: -.02em; }
.temp small { margin-left: 3px; font-size: 13px; font-weight: 700; color: #90a1b9; }
.temp i { width: 2px; height: 18px; margin: 0 11px; align-self: center; background: #cad5e2; }
.temp time { font-size: 21px; font-weight: 800; color: #314158; }
.temp .sec { font-size: 9px; color: #a3b0c4; margin-left: 4px; }
.place { display: flex; align-items: center; gap: 4px; font-size: 10px; font-weight: 800; }
.place .icon { color: #148be3; }
.air { display: flex; gap: 13px; margin-top: 3px; font-size: 8px; line-height: 14px; font-weight: 700; letter-spacing: .1em; color: #90a1b9; }
.air .emoji { margin-right: 4px; }

.agenda { padding: 21px; background: #f3f3f3; border: 1px solid #e0e5ea; border-radius: 29px; box-shadow: 0 6px 12px -2px rgba(98, 116, 142, .25); }
.agenda-head { display: flex; align-items: center; justify-content: space-between; padding: 1px 0 24px; }
.agenda-head h3 { font-size: 16px; line-height: 21px; font-weight: 900; letter-spacing: -.02em; }
.agenda-head span { padding: 0 7px; border-radius: 4px; background: #ecedef; color: #90a1b9; font-size: 9px; line-height: 20px; font-weight: 800; letter-spacing: .1em; }
.scroll { display: flex; overflow: hidden; }
.agenda .scroll { height: 271px; }
.thumb { width: 5px; border-radius: 3px; background: #c0cad5; flex: none; }
.thumb-agenda { height: 265px; }
.slots { flex: 1; padding: 3px 7px 0 3px; }
.slots li { display: flex; height: 74px; }
.slots div { flex: 1; margin-left: 17px; }
.mark { display: flex; flex-direction: column; align-items: center; gap: 3px; padding: 4px 0 3px; }
.mark::before { content: ""; width: 8px; height: 8px; border-radius: 50%; background: #d5dce4; }
.mark::after { content: ""; width: 2px; flex: 1; background: #e3e6ec; }
.slots .icon { margin-top: -3px; color: #d5dce4; }
.slots li:last-child .mark::after { display: none; }
.time { font-size: 11px; line-height: 16px; font-weight: 700; color: #62748e; letter-spacing: -.025em; }
.who { margin-top: 4px; line-height: 16px; font-weight: 800; letter-spacing: -.015em; }
.type { font-size: 10px; line-height: 14px; font-weight: 500; color: #90a1b9; }

.stats { display: grid; grid-template-columns: repeat(4, 1fr); gap: 22px; margin-top: 36px; }
.stats article, .quick a { background: #f3f3f3; border: 1px solid #d5dce4; box-shadow: 0 1px 3px rgba(98, 116, 142, .25); }
.stats article { padding: 21px; border-radius: 14px; }
.stat-top { display: flex; justify-content: space-between; align-items: flex-start; }
.tile { position: relative; display: grid; place-items: center; width: 43px; height: 42px; border-radius: 9px; flex: none; }
.stats .tile { width: 44px; height: 44px; border-radius: 11px; }
.blue { background: #dce9f2; color: #148be3; }
.amber { background: #f3e9dc; color: #fb9608; }
.green { background: #d9ede6; color: #10b981; }
.indigo { background: #e3e3f3; color: #6366f1; }
.mint { background: #c6eedb; color: #10b07a; }
.orange { background: #f3e2ca; color: #f56600; }
.purple { background: #e9dcf3; color: #a445f5; }
.sky-blue { background: #d5e8f4; color: #109ae6; }
.delta { padding: 0 11px; border-radius: 11px; font-size: 9px; line-height: 21px; font-weight: 700; }
.up { background: #dbefe3; color: #0f9f45; }
.flat { background: #e5e7ea; color: #90a1b9; }
.down { background: #f3dcde; color: #e0101a; }
.stats p { margin-top: 21px; font-size: 9px; line-height: 14px; font-weight: 700; letter-spacing: .1em; color: #62748e; }
.stats b { display: block; margin-top: 2px; font-size: 27px; line-height: 34px; }

.label { display: flex; align-items: center; gap: 7px; height: 22px; font-size: 9px; font-weight: 700; letter-spacing: .1em; color: #6a7282; }
.label .icon { color: #64b3ec; }
.label a { margin-left: auto; color: #148be3; }
.label-quick { margin: 36px 0 22px; }
.quick { display: grid; grid-template-columns: repeat(4, 1fr); gap: 15px; }
.quick a { display: flex; align-items: center; gap: 15px; padding: 15px 14px; border-radius: 11px; }
.quick-text { flex: 1; }
.quick-text b { display: block; line-height: 18px; }
.quick-text small { display: block; font-size: 9px; line-height: 14px; color: #62748e; }
.count { position: absolute; top: -4px; right: -4px; width: 14px; height: 15px; border: 1px solid #dbe0e6; border-radius: 7px; background: #f3f3f3; color: #0f172b; font-size: 8px; line-height: 13px; font-weight: 900; text-align: center; box-shadow: 0 1px 2px rgba(15, 23, 43, .12); }
.chev { color: #c3ccd8; }

/* Bottom columns */
.bottom { display: grid; grid-template-columns: repeat(3, minmax(0, 1fr)); gap: 29px; margin: 35px -3px 0; }
.col .label { margin: 0 3px 14px; }
.col .label-docs { margin-bottom: 21px; }
.panel { background: #f3f3f3; border: 1px solid #d5dce4; border-radius: 14px; }
.todo { padding: 18px 17px 40px; }
.add { display: flex; gap: 7px; }
.add input { flex: 1; height: 32px; padding: 0 11px; border: 1px solid #e3e7ec; border-radius: 7px; background: #ecedef; font-size: 11px; }
.add input::placeholder { color: #8a929e; }
.add button { display: grid; place-items: center; width: 32px; height: 32px; border-radius: 7px; background: #148be3; color: #f3f3f3; }
.todo .scroll { margin-top: 13px; }
.tasks { flex: 1; }
.tasks li { display: flex; gap: 7px; height: 54px; font-size: 11px; color: #314158; }
.tasks input { appearance: none; width: 15px; height: 15px; margin-top: 3px; border: 1px solid #b9c5d3; border-radius: 3px; background: #f5f5f5; }
.tasks label { display: block; line-height: 16px; }
.tasks a { display: flex; align-items: center; gap: 1px; font-size: 8px; font-weight: 700; color: #148be3; }
.thumb-todo { height: 56px; }

.tabs { display: flex; gap: 5px; height: 27px; padding-left: 4px; margin-bottom: 14px; }
.tab { display: flex; align-items: center; gap: 4px; padding: 0 9px; border: solid #a9d2ee; border-width: 0 1px; border-radius: 7px; background: #d8e6ef; color: #148be3; font-size: 8px; font-weight: 700; }
.tab-add { padding: 0 4px; background: none; border: dashed #d5dce4; border-width: 0 1px; border-radius: 7px; color: #90a1b9; }
.thumb-tabs { height: 25px; margin-left: auto; }
.notes { padding: 15px 14px; }
.tools { display: flex; justify-content: space-between; align-items: center; padding-bottom: 7px; border-bottom: 1px solid #e0e4ea; }
.dots { display: flex; gap: 3px; }
.dots i { width: 10px; height: 10px; border-radius: 50%; }
.c1 { background: #3b9ae8; } .c2 { background: #f05252; } .c3 { background: #2fc66d; } .c4 { background: #f5982f; }
.c5 { background: #b366f5; } .c6 { background: #ee55a3; } .c7 { background: #28bcd6; } .c8 { background: #f2c32c; }
.list { color: #45556c; }
.tools-end { display: flex; align-items: center; gap: 6px; }
.ideas { display: flex; align-items: center; gap: 3px; height: 29px; padding: 0 7px; border-radius: 4px; background: linear-gradient(90deg, #009689, #1d78c8 45%, #4f39f6); color: #f3f3f3; font-size: 8px; font-weight: 900; box-shadow: 0 1px 3px rgba(15, 23, 43, .2); }
.tools select { height: 19px; width: 81px; padding: 0 4px; border: 1px solid #d5dce4; border-radius: 4px; background: #ecedef; color: #45556c; font-size: 9px; font-weight: 700; }
.notes textarea { display: block; width: 100%; margin-top: 11px; border: 0; outline: 0; resize: none; background: none; font-size: 11px; line-height: 18px; color: #45556c; overflow: hidden; }

.docs { overflow: hidden; }
.docs table { width: 100%; border-collapse: collapse; table-layout: fixed; }
.w-doc { width: 39%; } .w-who { width: 28%; } .w-status { width: 20%; }
.docs th { height: 42px; padding: 0 21px 0 22px; background: #ecedef; text-align: left; font-size: 9px; font-weight: 700; letter-spacing: .1em; color: #90a1b9; }
.docs td { height: 61px; padding: 0 21px 0 22px; border-bottom: 1px solid #e0e4ea; }
.file { display: flex; align-items: center; gap: 11px; }
.file > span { display: grid; place-items: center; width: 28px; height: 29px; border-radius: 5px; background: #e5e9ee; color: #148be3; flex: none; }
.file b { display: block; width: 140px; line-height: 18px; font-weight: 500; overflow: hidden; text-overflow: ellipsis; white-space: nowrap; }
.file small { display: block; font-size: 9px; line-height: 14px; font-weight: 600; letter-spacing: .1em; color: #62748e; }
.patient { font-size: 11px; font-weight: 600; letter-spacing: -.025em; color: #45556c; }
.done { display: inline-block; padding: 0 10px; border-radius: 11px; background: #dce9f0; color: #148be3; font-size: 9px; line-height: 21px; font-weight: 700; }
.go .icon { margin: 0 0 8px auto; color: #c3ccd8; }

/* Soft blue light around the window edge */
.glow { position: fixed; inset: 0; pointer-events: none; box-shadow: inset 0 0 36px rgba(59, 130, 246, .3), inset -14px 0 22px -12px rgba(59, 130, 246, .35), inset 0 12px 20px -12px rgba(59, 130, 246, .2), inset 0 -12px 20px -12px rgba(59, 130, 246, .2); }
```
